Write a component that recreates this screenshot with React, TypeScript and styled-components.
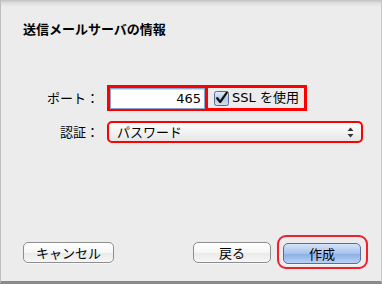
import React from "react";
import styled, { createGlobalStyle } from "styled-components";

const Global = createGlobalStyle`
  html, body { margin: 0; padding: 0; width: 382px; height: 284px; overflow: hidden; background: #ececec; }
  body { font-family: "DejaVu Sans", "Noto Sans CJK JP", sans-serif; color: #000; }
  * { box-sizing: border-box; }
`;

const Sheet = styled.div`
  width: 382px;
  height: 284px;
  display: flex;
  flex-direction: column;
  background: linear-gradient(#c2c2c2 0px, #dedede 3px, #ececec 7px);
  border-left: 1px solid #bdbdbd;
  border-right: 1px solid #c8c8c8;
  border-bottom: 3px solid #8a8a8a;
  padding: 0 13px 12px 22px;
`;

const Title = styled.h1`
  margin: 21px 0 0 0;
  font-family: "Noto Sans CJK JP", sans-serif;
  font-size: 13px;
  line-height: 16px;
  font-weight: 700;
`;

const Form = styled.div`
  display: grid;
  grid-template-columns: 76px auto;
  column-gap: 8px;
  row-gap: 10px;
  margin-top: 48px;
  align-items: center;
`;

const Label = styled.div`
  font-family: "Noto Sans CJK JP", sans-serif;
  font-size: 13px;
  line-height: 16px;
  text-align: right;
`;

const FieldRow = styled.div`
  display: flex;
  align-items: stretch;
`;

const Mark = styled.div<{ $w: number; $joined?: boolean }>`
  width: ${(p) => p.$w}px;
  height: 26px;
  border: 3px solid #ff0000;
  margin-left: ${(p) => (p.$joined ? -3 : 0)}px;
  display: flex;
  align-items: center;
`;

const PortInput = styled.div`
  flex: 1;
  height: 21px;
  background: #fff;
  border: 1px solid #8aa6cf;
  box-shadow: inset 0 1px 1px rgba(0, 0, 0, 0.15);
  font-family: "DejaVu Sans", sans-serif;
  font-size: 13px;
  line-height: 19px;
  text-align: right;
  padding-right: 3px;
`;

const CheckLabel = styled.label`
  display: flex;
  align-items: center;
  gap: 3px;
  padding-left: 6px;
  font-family: "DejaVu Sans", "Noto Sans CJK JP", sans-serif;
  font-size: 13px;
  line-height: 16px;
`;

const SelectMark = styled.div`
  width: 256px;
  height: 22px;
  border: 2.5px solid #ff0000;
  border-radius: 5px;
  display: flex;
  align-items: center;
  justify-content: space-between;
  padding: 0 7px 0 8px;
  background: linear-gradient(#ffffff, #f3f3f3 50%, #e6e6e6);
  font-family: "Noto Sans CJK JP", sans-serif;
  font-size: 13px;
  line-height: 16px;
`;

const Footer = styled.div`
  margin-top: auto;
  display: flex;
  align-items: flex-end;
`;

const Button = styled.div<{ $w: number; $primary?: boolean }>`
  width: ${(p) => p.$w}px;
  height: 21px;
  border-radius: 5px;
  border: 1px solid ${(p) => (p.$primary ? "#5b6d91" : "#8e8e8e")};
  background: ${(p) =>
    p.$primary
      ? "linear-gradient(#d5e3f8, #a9c3ec 50%, #8db0e6 55%, #b8d0f4)"
      : "linear-gradient(#ffffff, #f6f6f6 50%, #eaeaea 55%, #f7f7f7)"};
  box-shadow: 0 1px 0 rgba(255, 255, 255, 0.6);
  display: flex;
  align-items: center;
  justify-content: center;
  font-family: "Noto Sans CJK JP", sans-serif;
  font-size: 13px;
  line-height: 16px;
  margin-bottom: ${(p) => (p.$primary ? 3 : 6)}px;
`;

const Spacer = styled.div`
  flex: 1;
`;

const Highlight = styled.div`
  border: 2.5px solid #f0202a;
  border-radius: 9px;
  padding: 6px 5px 0 4px;
  margin-left: 6px;
`;

const Checkbox = () => (
  <svg width="15" height="15" viewBox="0 0 15 15">
    <defs>
      <linearGradient id="cb" x1="0" y1="0" x2="0" y2="1">
        <stop offset="0" stopColor="#e4ecf8" />
        <stop offset="0.5" stopColor="#b6cbea" />
        <stop offset="1" stopColor="#d2e0f4" />
      </linearGradient>
    </defs>
    <rect x="0.5" y="0.5" width="14" height="14" rx="2" fill="url(#cb)" stroke="#566c93" />
    <path d="M3.2 7.2 L6.2 11 L12.8 1.6" fill="none" stroke="#111" strokeWidth="2.2" strokeLinecap="round" strokeLinejoin="round" />
  </svg>
);

const Arrows = () => (
  <svg width="7" height="11" viewBox="0 0 7 11">
    <path d="M3.5 0.5 L6.5 4 L0.5 4 Z" fill="#333" />
    <path d="M3.5 10.5 L6.5 7 L0.5 7 Z" fill="#333" />
  </svg>
);

export default function App() {
  return (
    <>
      <Global />
      <Sheet>
        <Title>送信メールサーバの情報</Title>
        <Form>
          <Label>ポート：</Label>
          <FieldRow>
            <Mark $w={101}>
              <PortInput>465</PortInput>
            </Mark>
            <Mark $w={102} $joined>
              <CheckLabel>
                <Checkbox />
                SSL を使用
              </CheckLabel>
            </Mark>
          </FieldRow>
          <Label>認証：</Label>
          <SelectMark>
            <span>パスワード</span>
            <Arrows />
          </SelectMark>
        </Form>
        <Footer>
          <Button $w={91}>キャンセル</Button>
          <Spacer />
          <Button $w={78}>戻る</Button>
          <Highlight>
            <Button $w={78} $primary>
              作成
            </Button>
          </Highlight>
        </Footer>
      </Sheet>
    </>
  );
}
